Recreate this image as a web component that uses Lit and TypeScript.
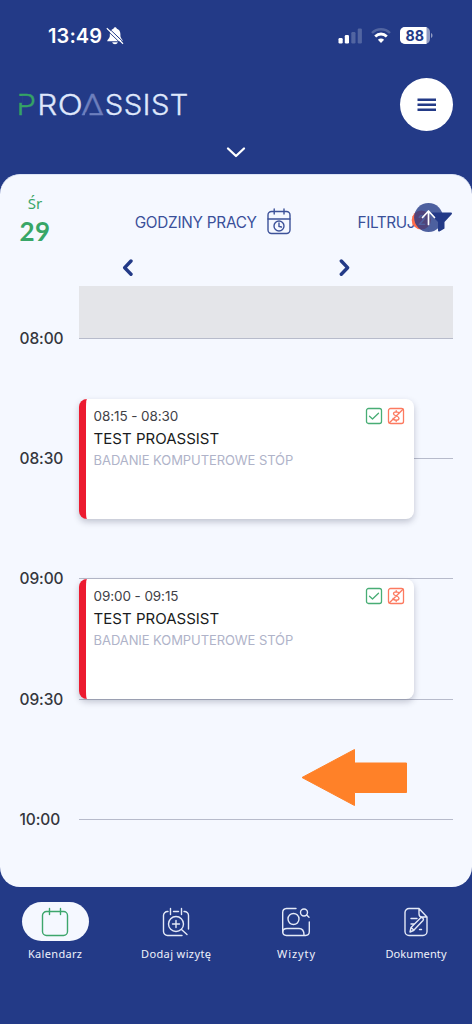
import { LitElement, html, css, svg } from "lit";
import { customElement, property } from "lit/decorators.js";

interface Visit {
  row: string;
  time: string;
  patient: string;
  service: string;
}

const HOURS = ["08:00", "08:30", "09:00", "09:30", "10:00"];

const VISITS: Visit[] = [
  { row: "3 / 5", time: "08:15 - 08:30", patient: "TEST PROASSIST", service: "BADANIE KOMPUTEROWE STÓP" },
  { row: "6 / 8", time: "09:00 - 09:15", patient: "TEST PROASSIST", service: "BADANIE KOMPUTEROWE STÓP" },
];

@customElement("status-bar")
class StatusBar extends LitElement {
  static styles = css`
    :host { display: flex; height: 71px; box-sizing: border-box; padding: 0 38px 0 48px; align-items: center; color: #fff; }
    .time { font: 600 20px/24px Inter, sans-serif; letter-spacing: 0.1px; }
    .bell { margin-left: 4px; }
    .space { flex: 1; }
    .wifi { margin-left: 8px; }
    .battery { margin-left: 9px; }
    .level { font: 700 14.5px Inter, sans-serif; fill: #233a87; }
    svg { display: block; }
  `;
  render() {
    return html`
      <span class="time">13:49</span>
      <svg class="bell" width="18" height="18" viewBox="0 0 18 18">
        <path d="M1.200 14.300c0-1.700 2.300-2.500 2.600-5V7c0-2.800 1.500-4.700 3.700-5.300C7.800-.3 10.500-.3 10.800 1.700 13 2.300 14.400 4.200 14.400 7v2.300c.3 2.500 2.400 3.300 2.400 5zM6.200 15.300h5.600c-.5 2.500-5.100 2.500-5.600 0z" fill="#fff"/>
        <path d="M1.500 0L17.800 15.500" stroke="#233a87" stroke-width="1"/>
        <path d="M.8 1.200L17 16.700" stroke="#fff" stroke-width="1.200"/>
        <path d="M0 2.300L16.200 17.800" stroke="#233a87" stroke-width="0.900"/>
      </svg>
      <span class="space"></span>
      <svg width="25" height="18" viewBox="0 0 25 18">
        <rect x="0.500" y="11" width="4.200" height="5.500" rx="1.200" fill="#fff"/>
        <rect x="6.800" y="8" width="4.200" height="8.500" rx="1.200" fill="#fff"/>
        <rect x="13.300" y="5" width="4.200" height="11.500" rx="1.200" fill="#5265a1"/>
        <rect x="19.700" y="1.500" width="4.200" height="15" rx="1.200" fill="#5265a1"/>
      </svg>
      <svg class="wifi" width="20" height="18" viewBox="0 0 20 18">
        <path d="M1 6C6 1 14 1 19 6" fill="none" stroke="#5265a1" stroke-width="2.400"/>
        <path d="M4.200 9.400C7.600 6.200 12.400 6.200 15.800 9.400" fill="none" stroke="#fff" stroke-width="2.800"/>
        <path d="M6.900 12.700C8.700 11 11.300 11 13.100 12.700L10 16z" fill="#fff"/>
      </svg>
      <svg class="battery" width="34" height="18" viewBox="0 0 34 18">
        <rect x="0" y="0" width="30" height="17" rx="5" fill="#919cc3"/>
        <path d="M5 0H26.500V17H5a5 5 0 0 1-5-5V5a5 5 0 0 1 5-5z" fill="#fff"/>
        <path d="M31 6c2 .7 2 4.300 0 5z" fill="#919cc3"/>
        <text class="level" x="5.500" y="13.700" textLength="18.500" lengthAdjust="spacingAndGlyphs">88</text>
      </svg>
    `;
  }
}

// Wordmark letters: glyph, left edge, advance width.
const WORDMARK: [string, number, number][] = [
  ["R", 19.2, 20],
  ["O", 39.8, 25],
  ["S", 86.7, 18.5],
  ["S", 105.7, 18.5],
  ["I", 124.5, 8.1],
  ["S", 132.9, 18.5],
  ["T", 151.8, 18.5],
];

@customElement("app-header")
class AppHeader extends LitElement {
  static styles = css`
    :host { display: block; height: 103px; }
    .bar { display: flex; justify-content: space-between; align-items: center; padding: 7px 19px 0 18px; }
    .logo { display: block; overflow: visible; }
    .word { font: 300 29px/30px Inter, sans-serif; fill: #dfe7fb; stroke: #dfe7fb; stroke-width: 0.35px; }
    .lead { fill: #35a365; stroke: #35a365; }
    .delta { fill: #6d7fbd; stroke: #6d7fbd; }
    .gap { fill: #233a87; stroke: none; }
    .menu { width: 53px; height: 53px; border: 0; padding: 0; border-radius: 50%; background: #fff; display: grid; place-items: center; }
    .toggle { display: block; margin: 15px auto 0; }
  `;
  render() {
    return html`
      <div class="bar">
        <svg class="logo" width="172" height="34" viewBox="0 -2 172 34">
          <g class="word">
            <text class="lead" x="-1.500" y="24.800" textLength="19.500" lengthAdjust="spacingAndGlyphs">P</text>
            <rect class="gap" x="0" y="6" width="4" height="6.800"/>
            ${WORDMARK.map(([c, x, w]) => svg`<text x=${x} y="24.800" textLength=${w} lengthAdjust="spacingAndGlyphs">${c}</text>`)}
            <text class="delta" x="63" y="24.800" textLength="23" lengthAdjust="spacingAndGlyphs">Δ</text>
            <path class="gap" d="M67.500 22.500H71.500V26H66.500Z"/>
          </g>
        </svg>
        <button class="menu" aria-label="Menu">
          <svg width="20" height="14" viewBox="0 0 20 14">
            <path d="M.5 1.700H19M.5 6.700H19M.5 11.700H19" stroke="#233a87" stroke-width="2.400"/>
          </svg>
        </button>
      </div>
      <svg class="toggle" width="20" height="12" viewBox="0 0 20 12">
        <path d="M2 2.500L10 10L18 2.500" fill="none" stroke="#fff" stroke-width="2.300" stroke-linecap="round" stroke-linejoin="round"/>
      </svg>
    `;
  }
}

@customElement("visit-card")
class VisitCard extends LitElement {
  @property({ attribute: false }) visit!: Visit;
  static styles = css`
    :host {
      display: flex; justify-content: space-between; box-sizing: border-box; height: 120px;
      padding: 7px 9px 0 7.600px; border-left: 7px solid #ec1b30; border-radius: 8px; background: #fff;
      box-shadow: 0 3px 6px rgba(40, 45, 70, 0.25); font-family: Inter, sans-serif;
    }
    .time { font-size: 13.500px; line-height: 21px; color: #3f4147; letter-spacing: -0.1px; }
    .patient { font-size: 15px; line-height: 24px; color: #191b20; letter-spacing: 0.02px; }
    .service { font-size: 13px; line-height: 19px; color: #afb3c9; letter-spacing: -0.08px; white-space: nowrap; }
    .flags { display: flex; gap: 4px; padding-top: 1px; height: 18px; }
  `;
  render() {
    return html`
      <div>
        <div class="time">${this.visit.time}</div>
        <div class="patient">${this.visit.patient}</div>
        <div class="service">${this.visit.service}</div>
      </div>
      <div class="flags">
        <svg width="18" height="18" viewBox="0 0 18 18" fill="none" stroke="#48ad75" stroke-width="1.300" stroke-linecap="round" stroke-linejoin="round">
          <rect x="1.500" y="1.500" width="15" height="15" rx="2"/>
          <path d="M4.500 9.300L7.500 12L13.500 6.200"/>
        </svg>
        <svg width="18" height="18" viewBox="0 0 18 18" fill="none" stroke="#fc7a60" stroke-width="1.300" stroke-linecap="round" stroke-linejoin="round">
          <rect x="1.500" y="1.500" width="15" height="15" rx="2"/>
          <path d="M2.200 16L16 2.200M12 6.500C11.500 4.200 6.500 4.300 6.500 6.800C6.500 9.500 12 8.500 12 11.200C12 13.800 6.500 13.700 6 11.500M9.200 3.700V5M9.200 13.200V14.500"/>
        </svg>
      </div>
    `;
  }
}

@customElement("day-schedule")
class DaySchedule extends LitElement {
  static styles = css`
    :host { display: grid; grid-template-columns: 59.500px 374px; grid-template-rows: 53px repeat(8, 60.100px); margin-left: 19.500px; }
    .slot { grid-column: 2; border-bottom: 1.500px solid #b7bbcb; box-sizing: border-box; }
    .closed { background: #e4e5e9; }
    .hour { grid-column: 1; align-self: end; font: 500 15.500px/20px Inter, sans-serif; color: #34363c; transform: translateY(50%); letter-spacing: -0.1px; }
    .visit { grid-column: 2; width: 335px; }
  `;
  render() {
    return html`
      ${HOURS.map((hour, i) => {
        const row = i === 0 ? "1 / 2" : `${i * 2} / ${i * 2 + 2}`;
        return html`<div class="hour" style="grid-row: ${row}">${hour}</div>
          <div class="slot ${i === 0 ? "closed" : ""}" style="grid-row: ${row}"></div>`;
      })}
      ${VISITS.map((v) => html`<visit-card class="visit" style="grid-row: ${v.row}" .visit=${v}></visit-card>`)}
    `;
  }
}

const calendarFrame = svg`<path d="M6 4.500H5.500A4 4 0 0 0 1.500 8.500V24.500A4 4 0 0 0 5.500 28.500H22.500A4 4 0 0 0 26.500 24.500V8.500A4 4 0 0 0 22.500 4.500ZM8.500 1.500V7.500M19.500 1.500V7.500"/>`;

const NAV = [
  { label: "Kalendarz", width: 54, icon: calendarFrame },
  {
    label: "Dodaj wizytę",
    width: 70,
    icon: svg`<path d="M11.500 4.500H16.500M22 4.500A4 4 0 0 1 26.500 8.500V22M20 28.500H5.500A4 4 0 0 1 1.500 24.500V8.500A4 4 0 0 1 5.500 4.500H6M8.500 1.500V7.500M19.500 1.500V7.500"/><circle cx="14" cy="17" r="7.500"/><path d="M14 13.500V20.500M10.500 17H17.500M19.500 22.500L25 27.500"/>`,
  },
  {
    label: "Wizyty",
    width: 38,
    icon: svg`<path d="M14 1.500H4.500A4 4 0 0 0 .7 5.500V24.500A4 4 0 0 0 4.500 28.500H23.500A4 4 0 0 0 27.300 24.500V15"/><circle cx="11.500" cy="12" r="5.500"/><circle cx="22" cy="5.500" r="3.500"/><path d="M24.700 8L27 10.200M.7 25C.7 22.500 2.500 21.500 5 21.500H17C20.500 21.500 22 24 22 28"/>`,
  },
  {
    label: "Dokumenty",
    width: 61,
    icon: svg`<path d="M17 1.500H7A4 4 0 0 0 3 5.500V24.500A4 4 0 0 0 7 28.500H21A4 4 0 0 0 25 24.500V10ZM17 1.500V7A3 3 0 0 0 20 10H25M9 11.500H15M9 17H12M17.500 22.500H19.500M8 25L9 20.500L18.500 11C20.500 9.800 22.300 11.800 21 13.500L11.500 23.500ZM9 20.500L12 23.300"/>`,
  },
];

@customElement("bottom-nav")
class BottomNav extends LitElement {
  static styles = css`
    :host { display: grid; grid-template-columns: repeat(4, 120.400px); margin: 15px 0 0 -5px; }
    .item { display: flex; flex-direction: column; align-items: center; }
    .pill { width: 67px; height: 39px; border-radius: 20px; display: grid; place-items: center; color: #e4e9f7; }
    .active { background: #f5f8ff; color: #3da66c; }
    .icon { fill: none; stroke: currentColor; stroke-width: 1.400px; stroke-linecap: round; stroke-linejoin: round; overflow: visible; }
    .label { display: block; margin-top: 4px; }
    .text { font: 400 11px "Noto Sans", sans-serif; fill: #eef1fb; text-anchor: middle; }
  `;
  render() {
    return NAV.map(
      (n, i) => html`<div class="item">
        <div class="pill ${i === 0 ? "active" : ""}">
          <svg class="icon" width="28" height="30" viewBox="0 0 28 30">${n.icon}</svg>
        </div>
        <svg class="label" width="100" height="18" viewBox="0 0 100 18">
          <text class="text" x="50" y="12.500" textLength=${n.width}>${n.label}</text>
        </svg>
      </div>`
    );
  }
}

@customElement("app-root")
class AppRoot extends LitElement {
  static styles = css`
    :host { display: block; width: 472px; height: 1024px; overflow: hidden; background: #233a87; font-family: Inter, sans-serif; }
    .panel { height: 713px; box-sizing: border-box; border-radius: 20px; background: #f5f8ff; overflow: hidden; border-top: 1px solid #dce4f5; }
    .top { display: flex; height: 73px; color: #314894; }
    .date { width: 70px; padding-top: 18px; text-align: center; color: #38a667; }
    .weekday { font: 400 15px/21px "Noto Sans", sans-serif; }
    .day { font: 700 26px/35px Lato, sans-serif; letter-spacing: 0.3px; }
    .action { display: flex; align-items: center; font-size: 15.500px; line-height: 20px; padding-top: 22px; height: 50px; }
    .hours { margin-left: 65px; gap: 9.500px; }
    .clock { margin-top: -1px; }
    .filter { margin-left: 67.500px; position: relative; }
    .funnel { margin-left: 13px; margin-top: -1px; }
    .overlay { position: absolute; left: 51.500px; top: 27px; }
    .count { font: 500 13px Inter, sans-serif; fill: #fff; }
    .arrows { display: flex; height: 38px; box-sizing: border-box; padding: 11px 121px 0 121px; justify-content: space-between; }
    .pointer { position: absolute; left: 301px; top: 748px; }
    svg { display: block; }
  `;
  render() {
    return html`
      <status-bar></status-bar>
      <app-header></app-header>
      <main class="panel">
        <div class="top">
          <div class="date">
            <div class="weekday">Śr</div>
            <div class="day">29</div>
          </div>
          <div class="action hours">
            <svg width="122" height="20" viewBox="0 0 122 20"><text x="-.3" y="16" textLength="122.300" fill="#3a509a" font-size="15.300">GODZINY PRACY</text></svg>
            <svg class="clock" width="24" height="27" viewBox="0 0 24 27" fill="none" stroke="#3d5299" stroke-width="1.400" stroke-linecap="round">
              <rect x="1" y="3.500" width="22" height="22" rx="3.500"/>
              <path d="M1 11H23M7.200 1V6M17 1V6"/>
              <circle cx="12" cy="18" r="5"/>
              <path d="M12 15V18.500L14.500 19"/>
            </svg>
          </div>
          <div class="action filter">
            <svg width="59" height="20" viewBox="0 0 59 20"><text x="-.5" y="16" textLength="58" fill="#3a509a" font-size="15.300">FILTRUJ</text></svg>
            <svg class="funnel" width="22" height="20" viewBox="0 0 22 20">
              <path d="M1 .5H21C22 .5 22.300 1.500 21.700 2.300L14.500 10V16.500L9.500 19.500C8.500 19.800 8 19.500 8 18.500V10L.4 2.300C-.2 1.500 0 .5 1 .5z" fill="#233a87"/>
            </svg>
            <svg class="overlay" width="34" height="32" viewBox="0 0 34 32">
              <circle cx="11.300" cy="18" r="9.600" fill="#ff6c4b"/>
              <text class="count" x="8" y="22.500">2</text>
              <circle cx="18.500" cy="15.500" r="14.400" fill="#233a87" fill-opacity="0.800"/>
              <path d="M18.500 22.500V9.500M12.500 15.500L18.500 9L24.500 15.500" fill="none" stroke="#fff" stroke-width="1.700" stroke-linecap="round" stroke-linejoin="round"/>
            </svg>
          </div>
        </div>
        <div class="arrows">
          <svg width="13" height="18" viewBox="0 0 13 18"><path d="M10 2L3.700 8.700L10 15.200" fill="none" stroke="#233a87" stroke-width="3.400" stroke-linecap="round" stroke-linejoin="round"/></svg>
          <svg width="13" height="18" viewBox="0 0 13 18"><path d="M3.300 2L9.600 8.700L3.300 15.200" fill="none" stroke="#233a87" stroke-width="3.400" stroke-linecap="round" stroke-linejoin="round"/></svg>
        </div>
        <day-schedule></day-schedule>
      </main>
      <bottom-nav></bottom-nav>
      <svg class="pointer" width="107" height="60" viewBox="0 0 107 60">
        <path d="M1 29.500L53.500 1.500V15H105.500V44.500H53.500V57.500Z" fill="#ff8128" stroke="#ff8128" stroke-width="1" stroke-linejoin="round"/>
      </svg>
    `;
  }
}
